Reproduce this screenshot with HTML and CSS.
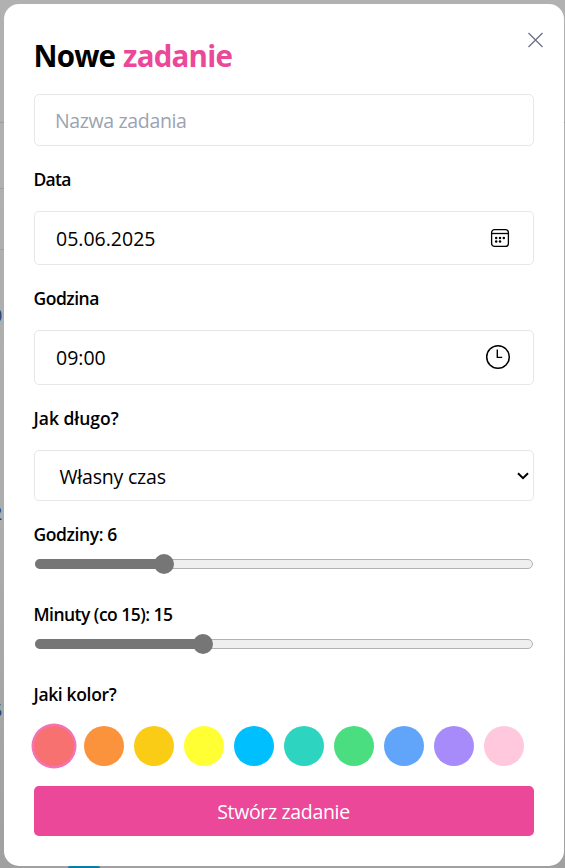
FILE: index.html
```html
<!DOCTYPE html>
<html lang="pl">
<head>
<meta charset="utf-8">
<title>Nowe zadanie</title>
<link rel="stylesheet" href="styles.css">
</head>
<body>
<div class="backdrop" aria-hidden="true">
  <i class="rule rule-1"></i><i class="rule rule-2"></i><i class="rule rule-3"></i>
  <i class="rule rule-right"></i>
  <span class="peek peek-1">0</span><span class="peek peek-2">2</span><span class="peek peek-3">5</span>
  <i class="tab"></i>
</div>
<form class="modal">
  <button class="close" type="button" aria-label="Zamknij">
    <svg width="16" height="16" viewBox="0 0 16 16"><path d="M1.5 1L15.5 15M15.5 1L1.5 15" fill="none" stroke="#6b7280" stroke-width="1.3"/></svg>
  </button>
  <h1 class="title"><span class="t-first">Nowe</span> <span class="accent">zadanie</span></h1>
  <input class="field name" type="text" placeholder="Nazwa zadania">
  <label class="label l-data"><span>Data</span></label>
  <div class="field date">
    <span class="value v-date">05.06.2025</span>
    <svg class="calendar" width="20" height="20" viewBox="0 0 20 20">
      <rect x="1.6" y="1.6" width="16.8" height="16.8" rx="3" fill="none" stroke="#000" stroke-width="1.3"/>
      <path d="M1.6 5.5H18.4" stroke="#000" stroke-width="1.3"/>
      <g><circle cx="6.2" cy="10" r="1.25"/><circle cx="10" cy="10" r="1.25"/><circle cx="13.8" cy="10" r="1.25"/><circle cx="6.2" cy="13.6" r="1.25"/><circle cx="10" cy="13.6" r="1.25"/></g>
    </svg>
  </div>
  <label class="label l-hour"><span>Godzina</span></label>
  <div class="field time">
    <span class="value v-time">09:00</span>
    <svg class="clock" width="26" height="26" viewBox="0 0 26 26"><circle cx="13" cy="13" r="11.3" fill="none" stroke="#000" stroke-width="1.5"/><path d="M12.3 5.5V13.4H17.2" fill="none" stroke="#000" stroke-width="1.4"/></svg>
  </div>
  <label class="label l-long"><span>Jak długo?</span></label>
  <div class="field select">
    <span class="value v-select">Własny czas</span>
    <svg width="12" height="8" viewBox="0 0 12 8"><path d="M1 1.2L6 6.2L11 1.2" fill="none" stroke="#000" stroke-width="2"/></svg>
  </div>
  <label class="label l-hours"><span>Godziny: 6</span></label>
  <div class="slider hours"><div class="fill"></div><div class="thumb"></div></div>
  <label class="label l-mins"><span>Minuty (co 15): 15</span></label>
  <div class="slider minutes"><div class="fill"></div><div class="thumb"></div></div>
  <label class="label l-color"><span>Jaki kolor?</span></label>
  <div class="colors">
    <i class="dot red selected"></i><i class="dot orange"></i><i class="dot amber"></i><i class="dot yellow"></i><i class="dot sky"></i><i class="dot teal"></i><i class="dot green"></i><i class="dot blue"></i><i class="dot violet"></i><i class="dot pink"></i>
  </div>
  <button class="submit" type="button"><span>Stwórz zadanie</span></button>
</form>
</body>
</html>
```
FILE: styles.css
```css
* { box-sizing: border-box; }
body {
  margin: 0;
  width: 565px;
  height: 868px;
  overflow: hidden;
  background: #b0b0b0;
  color: #000;
  font-family: "Open Sans", "Noto Sans", sans-serif;
  font-size: 19.5px;
  padding: 4px 1px 2px 4px;
}
.backdrop { position: absolute; inset: 0; overflow: hidden; background: linear-gradient(#b1b1b1, #adadad 60%, #a0a0a0); }
.rule { position: absolute; left: 0; width: 4px; height: 1px; background: #9c9ea0; }
.rule-1 { top: 122px; }
.rule-2 { top: 188px; }
.rule-3 { top: 249px; }
.rule-right { left: 564px; top: 122px; }
.peek { position: absolute; left: -8px; font-size: 18px; line-height: 20px; color: #24426f; }
.peek-1 { top: 305px; }
.peek-2 { top: 503px; }
.peek-3 { top: 700px; }
.tab { position: absolute; left: 68px; top: 866px; width: 32px; height: 2px; background: #087da5; border-radius: 2px 2px 0 0; }

.modal {
  position: relative;
  display: flex;
  flex-direction: column;
  width: 560px;
  height: 862px;
  padding: 30px;
  background: #fff;
  border-radius: 15px;
}
.close { position: absolute; right: 21px; top: 28px; padding: 0; border: 0; background: none; line-height: 0; }
.title { margin: 0 0 20px -0.5px; height: 40px; line-height: 44px; font-size: 29.5px; font-weight: 700; letter-spacing: -0.8px; word-spacing: 1px; white-space: nowrap; }
.accent { color: #ec4899; }
.field {
  display: flex;
  align-items: center;
  justify-content: space-between;
  width: 500px;
  padding: 0 20px;
  border: 1px solid #e5e7eb;
  border-radius: 5px;
  background: #fff;
  white-space: nowrap;
}
.name { height: 52px; font: inherit; letter-spacing: -0.35px; outline: none; }
.name::placeholder { color: #9ca3af; opacity: 1; }
.date { height: 54px; padding: 0 23px 0 21px; }
.time { height: 55px; padding: 0 22px 0 21px; }
.clock { margin-bottom: 2px; }
.select { height: 51px; padding: 0 4px 0 24.5px; }
.v-select { padding-top: 2px; letter-spacing: -0.2px; }
.label { display: block; height: 25px; margin: 20px 0 20px -0.5px; line-height: 27px; font-size: 17.5px; font-weight: 600; white-space: nowrap; }
.l-data { letter-spacing: -0.75px; }
.l-hour { letter-spacing: -0.5px; }
.l-hours { letter-spacing: -0.4px; }
.l-mins { letter-spacing: -0.53px; }
.l-color { letter-spacing: -0.35px; }
.l-hours, .l-mins { margin-bottom: 0; }
.l-mins { margin-top: 32px; }
.l-color { margin-top: 32px; }
.slider { position: relative; height: 10px; margin: 13px 1px 0; border: 1px solid #b2b2b2; border-radius: 5px; background: #efefef; }
.fill { height: 10px; margin: -1px; border-radius: 5px 0 0 5px; background: #767676; }
.thumb { position: absolute; top: -6px; width: 20px; height: 20px; border-radius: 50%; background: #767676; }
.hours .fill { width: 130px; }
.hours .thumb { left: 118px; }
.minutes .fill { width: 169px; }
.minutes .thumb { left: 157px; }
.colors { display: flex; gap: 10px; height: 40px; }
.dot { width: 40px; height: 40px; border-radius: 50%; }
.selected { box-shadow: 0 0 0 2.5px #f472b6; }
.red { background: #f87171; }
.orange { background: #fb923c; }
.amber { background: #facc15; }
.yellow { background: #ffff33; }
.sky { background: #00bfff; }
.teal { background: #2dd4bf; }
.green { background: #4ade80; }
.blue { background: #60a5fa; }
.violet { background: #a78bfa; }
.pink { background: #ffc8dd; }
.submit { height: 50px; margin-top: 20px; padding: 1px 1px 0 0; border: 0; border-radius: 5px; background: #ec4899; color: #fff; font: inherit; letter-spacing: -0.33px; }
```
